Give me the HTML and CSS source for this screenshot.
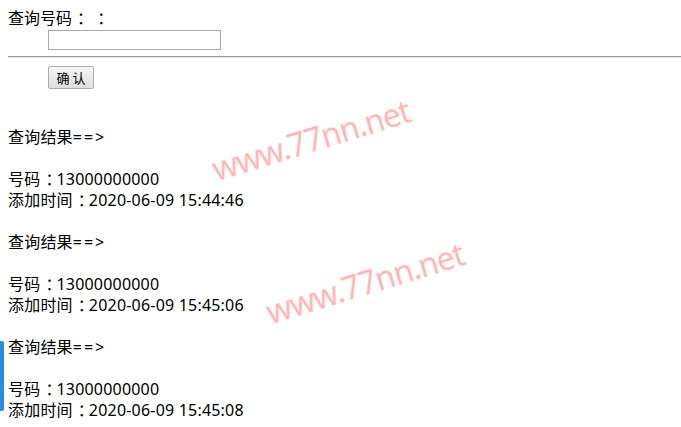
FILE: index.html
```html
<!DOCTYPE html>
<html lang="zh-CN">

<head>
  <meta charset="UTF-8">
  <meta name="viewport" content="width=device-width, initial-scale=1.0">
  <title>号码查询</title>
  <link rel="stylesheet" href="styles.css">
</head>

<body>
  <form class="search">
    <div class="label">查询号码<span class="colon">：</span> <span class="colon">：</span></div>
    <div class="field"><input type="text" class="phone"></div>
    <hr class="rule">
    <div class="field"><button type="button" class="confirm">确 认</button></div>
  </form>

  <div class="results">
    <div class="item">
      <p>查询结果<span class="arrow">==&gt;</span></p>
      <p class="blank"></p>
      <p>号码<span class="colon">：</span>13000000000</p>
      <p>添加时间<span class="colon">：</span>2020-06-09 15:44:46</p>
      <p class="blank"></p>
    </div>
    <div class="item">
      <p>查询结果<span class="arrow">==&gt;</span></p>
      <p class="blank"></p>
      <p>号码<span class="colon">：</span>13000000000</p>
      <p>添加时间<span class="colon">：</span>2020-06-09 15:45:06</p>
      <p class="blank"></p>
    </div>
    <div class="item">
      <p>查询结果<span class="arrow">==&gt;</span></p>
      <p class="blank"></p>
      <p>号码<span class="colon">：</span>13000000000</p>
      <p>添加时间<span class="colon">：</span>2020-06-09 15:45:08</p>
    </div>
  </div>

  <!-- site watermarks -->
  <div class="mark mark-1">www.77nn.net</div>
  <div class="mark mark-2">www.77nn.net</div>

  <!-- side tab -->
  <div class="side-tab"></div>
</body>

</html>
```

FILE: styles.css
```css
* {
  margin: 0;
  padding: 0;
  box-sizing: border-box;
}

body {
  margin: 8px 0 0 8px;
  font-family: "Noto Sans", "Noto Sans CJK SC", sans-serif;
  font-size: 16px;
  line-height: 21px;
  color: #000000;
  background: #ffffff;
  overflow: hidden;
}

/* full-width colon: push the dots to the middle of their cell */
.colon {
  padding-left: 5px;
  letter-spacing: -5px;
}

.arrow {
  letter-spacing: 2px;
}

.label {
  height: 21px;
  white-space: pre;
}

.field {
  padding-left: 40px;
  height: 21px;
  display: flex;
  align-items: center;
}

.phone {
  width: 173px;
  height: 20px;
  border: 1px solid #a9a9a9;
  background: #ffffff;
}

.rule {
  border: none;
  border-top: 1px solid #9a9a9a;
  border-bottom: 1px solid #e6e6e6;
  margin: 6px 0 8px 0;
}

.search .field:last-child {
  height: 23px;
}

.confirm {
  width: 46px;
  height: 23px;
  font-family: "Noto Sans CJK SC", sans-serif;
  font-size: 13px;
  line-height: 1;
  color: #000000;
  border: 1px solid #adadad;
  border-radius: 2px;
  background: linear-gradient(#f6f6f6, #dedede);
}

.results {
  margin-top: 38px;
}

.item p {
  height: 21px;
  letter-spacing: 0.2px;
}

.mark {
  position: absolute;
  font-family: "Noto Sans", sans-serif;
  font-size: 32px;
  letter-spacing: -1px;
  line-height: 1;
  color: #ffb4b4;
  transform: translate(-50%, -50%) rotate(-17deg);
  filter: blur(0.4px);
  white-space: nowrap;
}

.mark-1 {
  left: 311px;
  top: 140px;
}

.mark-2 {
  left: 365px;
  top: 283px;
}

.side-tab {
  position: absolute;
  left: 0;
  top: 341px;
  width: 4px;
  height: 70px;
  background: #2b8ce8;
  border-radius: 0 2px 2px 0;
}
```
